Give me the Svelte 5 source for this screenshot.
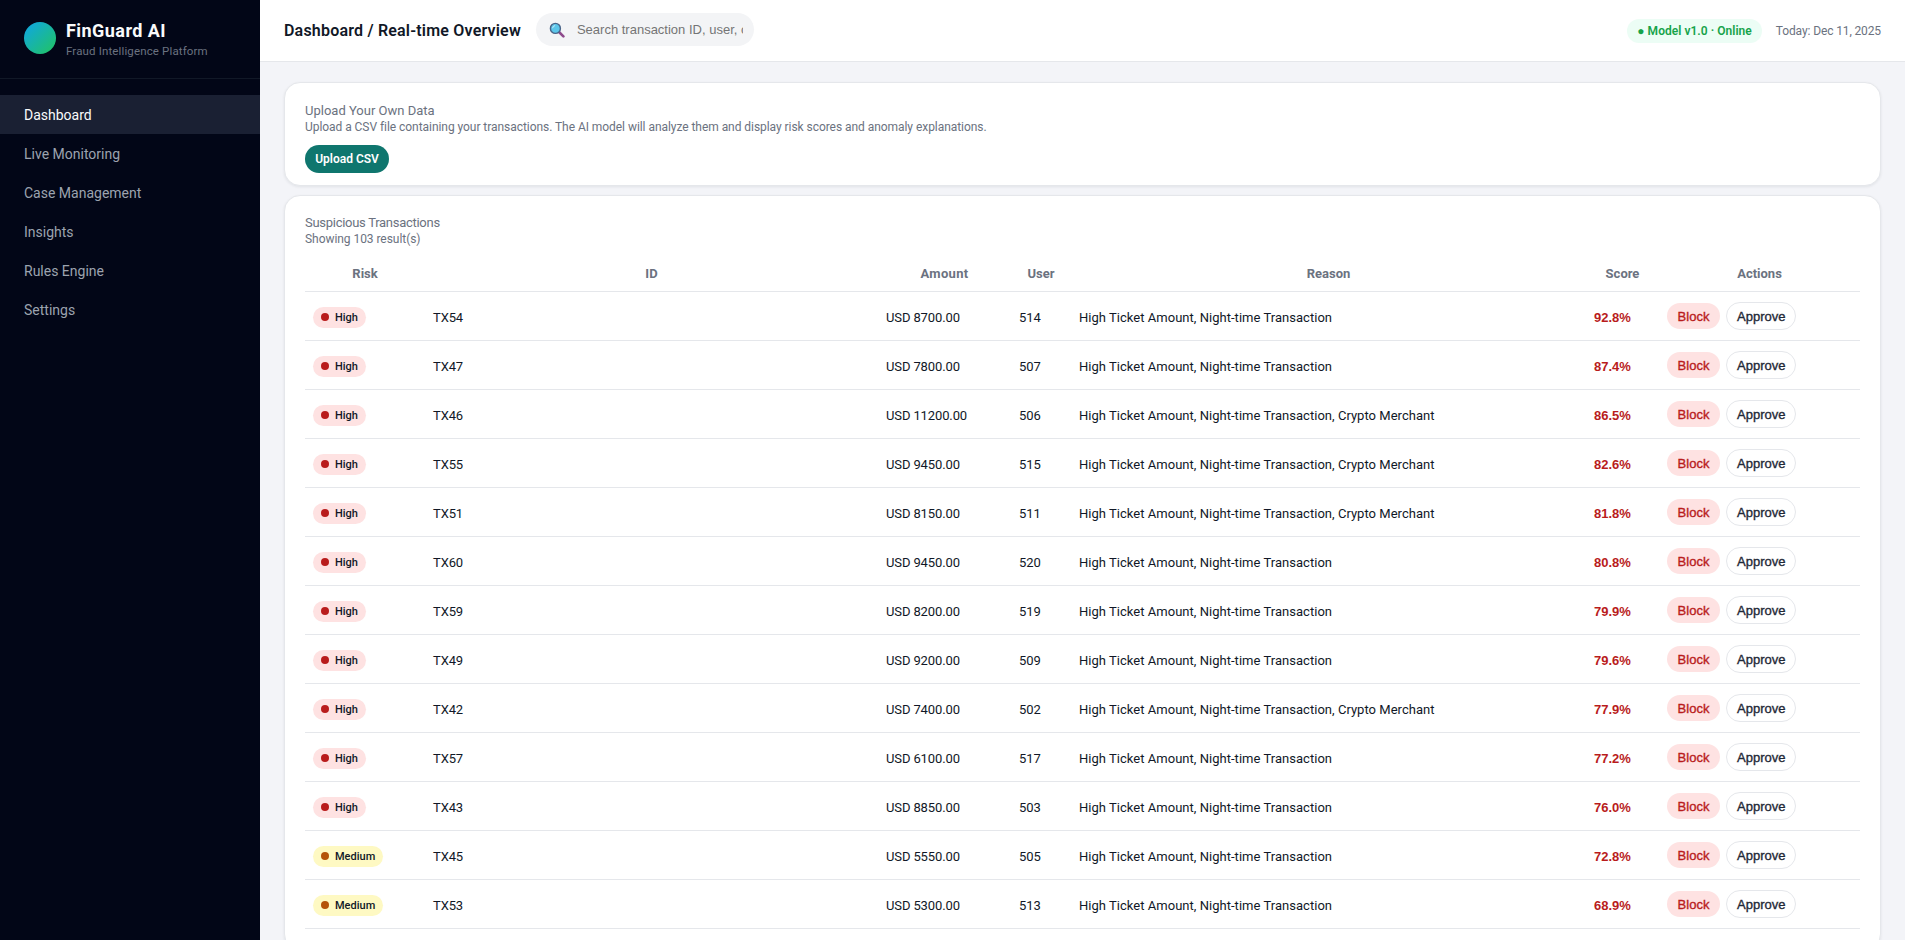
<script>
  const rows = [
    ['High','TX54','USD 8700.00','514','High Ticket Amount, Night-time Transaction','92.8%'],
    ['High','TX47','USD 7800.00','507','High Ticket Amount, Night-time Transaction','87.4%'],
    ['High','TX46','USD 11200.00','506','High Ticket Amount, Night-time Transaction, Crypto Merchant','86.5%'],
    ['High','TX55','USD 9450.00','515','High Ticket Amount, Night-time Transaction, Crypto Merchant','82.6%'],
    ['High','TX51','USD 8150.00','511','High Ticket Amount, Night-time Transaction, Crypto Merchant','81.8%'],
    ['High','TX60','USD 9450.00','520','High Ticket Amount, Night-time Transaction','80.8%'],
    ['High','TX59','USD 8200.00','519','High Ticket Amount, Night-time Transaction','79.9%'],
    ['High','TX49','USD 9200.00','509','High Ticket Amount, Night-time Transaction','79.6%'],
    ['High','TX42','USD 7400.00','502','High Ticket Amount, Night-time Transaction, Crypto Merchant','77.9%'],
    ['High','TX57','USD 6100.00','517','High Ticket Amount, Night-time Transaction','77.2%'],
    ['High','TX43','USD 8850.00','503','High Ticket Amount, Night-time Transaction','76.0%'],
    ['Medium','TX45','USD 5550.00','505','High Ticket Amount, Night-time Transaction','72.8%'],
    ['Medium','TX53','USD 5300.00','513','High Ticket Amount, Night-time Transaction','68.9%']
  ];
  const nav = ['Dashboard','Live Monitoring','Case Management','Insights','Rules Engine','Settings'];
</script>

<div class="app">
  <aside class="sidebar">
    <div class="brand">
      <div class="logo"></div>
      <div class="brand-text">
        <div class="brand-name">FinGuard AI</div>
        <div class="brand-sub">Fraud Intelligence Platform</div>
      </div>
    </div>
    <nav class="nav">
      {#each nav as item, i}
        <div class="nav-item" class:active={i === 0}>{item}</div>
      {/each}
    </nav>
  </aside>
  <div class="main">
    <header class="topbar">
      <div class="top-left">
        <div class="crumb">Dashboard / Real-time Overview</div>
        <div class="search">
          <svg class="search-icon" viewBox="0 0 16 16" width="16" height="16">
            <path d="M10 10 L14.4 14.4" stroke="#8e4a8c" stroke-width="2.6" stroke-linecap="round"/>
            <circle cx="6.4" cy="6.4" r="5" fill="#5cc6ea" stroke="#4a6488" stroke-width="1.4"/>
            <path d="M3.6 6.2a2.9 2.9 0 0 1 2.5-2.6" stroke="#c9eefb" stroke-width="1" fill="none"/>
          </svg>
          <input class="search-input" placeholder="Search transaction ID, user, city..." />
        </div>
      </div>
      <div class="top-right">
        <div class="status">● Model v1.0 · Online</div>
        <div class="today">Today: Dec 11, 2025</div>
      </div>
    </header>
    <main class="content">
      <section class="card upload">
        <div class="card-title">Upload Your Own Data</div>
        <div class="card-sub">Upload a CSV file containing your transactions. The AI model will analyze them and display risk scores and anomaly explanations.</div>
        <button class="upload-btn">Upload CSV</button>
      </section>
      <section class="card txns">
        <div class="card-title tight">Suspicious Transactions</div>
        <div class="card-sub">Showing 103 result(s)</div>
        <table>
          <colgroup>
            <col class="c1"/><col class="c2"/><col class="c3"/><col class="c4"/><col class="c5"/><col class="c6"/><col class="c7"/>
          </colgroup>
          <thead>
            <tr><th>Risk</th><th>ID</th><th class="wide">Amount</th><th>User</th><th>Reason</th><th>Score</th><th>Actions</th></tr>
          </thead>
          <tbody>
            {#each rows as r}
              <tr>
                <td><span class="pill {r[0].toLowerCase()}"><span class="dot"></span>{r[0]}</span></td>
                <td class="num">{r[1]}</td>
                <td class="num">{r[2]}</td>
                <td>{r[3]}</td>
                <td class="reason">{r[4]}</td>
                <td class="score">{r[5]}</td>
                <td class="actions"><button class="block">Block</button><button class="approve">Approve</button></td>
              </tr>
            {/each}
          </tbody>
        </table>
      </section>
    </main>
  </div>
</div>

<style>
  :global(body) { margin: 0; overflow: hidden; background: #f3f4f8; }
  .app { display: flex; height: 940px; overflow: hidden; font-family: Roboto, "Noto Sans", sans-serif; color: #111827; }
  .sidebar { width: 260px; flex: none; background: #020617; color: #e5e7eb; }
  .brand { display: flex; align-items: center; gap: 10px; height: 76px; padding: 0 24px 2px; border-bottom: 1px solid #111827; }
  .logo { width: 32px; height: 32px; border-radius: 50%; background: linear-gradient(135deg, #0ea5e9, #22c55e); }
  .brand-text { padding-top: 2px; }
  .brand-name { font-size: 18px; font-weight: 700; color: #f9fafb; line-height: 24px; letter-spacing: .45px; }
  .brand-sub { font-size: 11.5px; color: #6b7280; line-height: 16px; letter-spacing: .14px; }
  .nav { padding-top: 16px; }
  .nav-item { height: 39px; line-height: 41px; padding: 0 24px; font-size: 14px; color: #9ca3af; }
  .nav-item.active { background: #1a2033; color: #f9fafb; }
  .main { flex: 1; min-width: 0; display: flex; flex-direction: column; }
  .topbar { height: 61px; flex: none; background: #fff; border-bottom: 1px solid #e5e7eb; display: flex; align-items: center; justify-content: space-between; padding: 0 24px; }
  .top-left { display: flex; align-items: center; gap: 15px; }
  .crumb { font-size: 16px; font-weight: 600; color: #111827; letter-spacing: .2px; }
  .search { width: 218px; height: 33px; margin-bottom: 2px; box-sizing: border-box; background: #f3f4f6; border-radius: 999px; display: flex; align-items: center; gap: 12px; padding: 0 11px 0 13px; }
  .search-icon { flex: none; }
  .search-input { flex: 1; min-width: 0; border: 0; outline: 0; background: transparent; font-family: "Liberation Sans", sans-serif; font-size: 13px; color: #111827; padding: 0; }
  .search-input::placeholder { color: #757575; }
  .top-right { display: flex; align-items: center; gap: 14px; }
  .status { background: #ecfdf5; color: #16a34a; font-size: 12px; font-weight: 600; height: 24px; line-height: 24px; padding: 0 10px; border-radius: 999px; letter-spacing: .03px; }
  .today { font-size: 12px; color: #6b7280; letter-spacing: -.12px; }
  .content { flex: 1; padding: 20px 24px; display: flex; flex-direction: column; gap: 9px; overflow: hidden; }
  .card { background: #fff; border: 1px solid #e5e7eb; border-radius: 16px; padding: 20px; box-shadow: 0 1px 3px rgba(15,23,42,.08); flex: none; }
  .upload { padding-bottom: 12px; }
  .txns { padding-top: 19px; }
  .card-title { font-size: 13px; line-height: 16px; color: #6b7280; }
  .card-title.tight { letter-spacing: -.28px; }
  .card-sub { font-size: 12px; line-height: 16px; color: #6b7280; letter-spacing: -.05px; }
  .upload-btn { margin-top: 10px; background: #0f766e; color: #fff; border: 0; border-radius: 999px; font-family: inherit; font-size: 12px; font-weight: 600; height: 28px; width: 84px; padding: 0; display: block; }
  table { width: 1555px; table-layout: fixed; border-collapse: collapse; margin-top: 8px; font-size: 13px; }
  .c1 { width: 120px; } .c2 { width: 453px; } .c3 { width: 133px; } .c4 { width: 60px; } .c5 { width: 515px; } .c6 { width: 73px; } .c7 { width: 201px; }
  th { height: 36px; font-size: 13px; font-weight: 700; color: #6b7280; text-align: center; border-bottom: 1px solid #e5e7eb; padding: 0 8px; }
  th.wide { letter-spacing: .3px; }
  td { height: 46px; padding: 2px 8px 0; border-bottom: 1px solid #e5e7eb; }
  td.actions { height: 48px; padding: 0 8px; }
  .num { letter-spacing: -.12px; }
  .reason { letter-spacing: .03px; }
  .pill { display: inline-flex; align-items: center; gap: 6px; height: 21px; padding: 0 8px; border-radius: 999px; font-size: 11px; font-weight: 500; vertical-align: middle; }
  .dot { width: 8px; height: 8px; border-radius: 50%; }
  .pill.high { background: #fee2e2; }
  .pill.high .dot { background: #b91c1c; }
  .pill.medium { background: #fef9c3; }
  .pill.medium .dot { background: #b45309; }
  .score { color: #b91c1c; font-weight: 700; font-family: "Liberation Sans", sans-serif; }
  .actions button { font-family: "Liberation Sans", sans-serif; font-size: 13px; border-radius: 999px; font-weight: 400; vertical-align: middle; -webkit-text-stroke: 0.35px currentColor; padding: 0 10px; }
  .block { background: #fee2e2; color: #b91c1c; border: 0; height: 26px; margin-right: 6px; width: 53px; }
  .approve { background: #fff; color: #1f2937; border: 1px solid #e5e7eb; height: 28px; width: 70px; }
</style>
